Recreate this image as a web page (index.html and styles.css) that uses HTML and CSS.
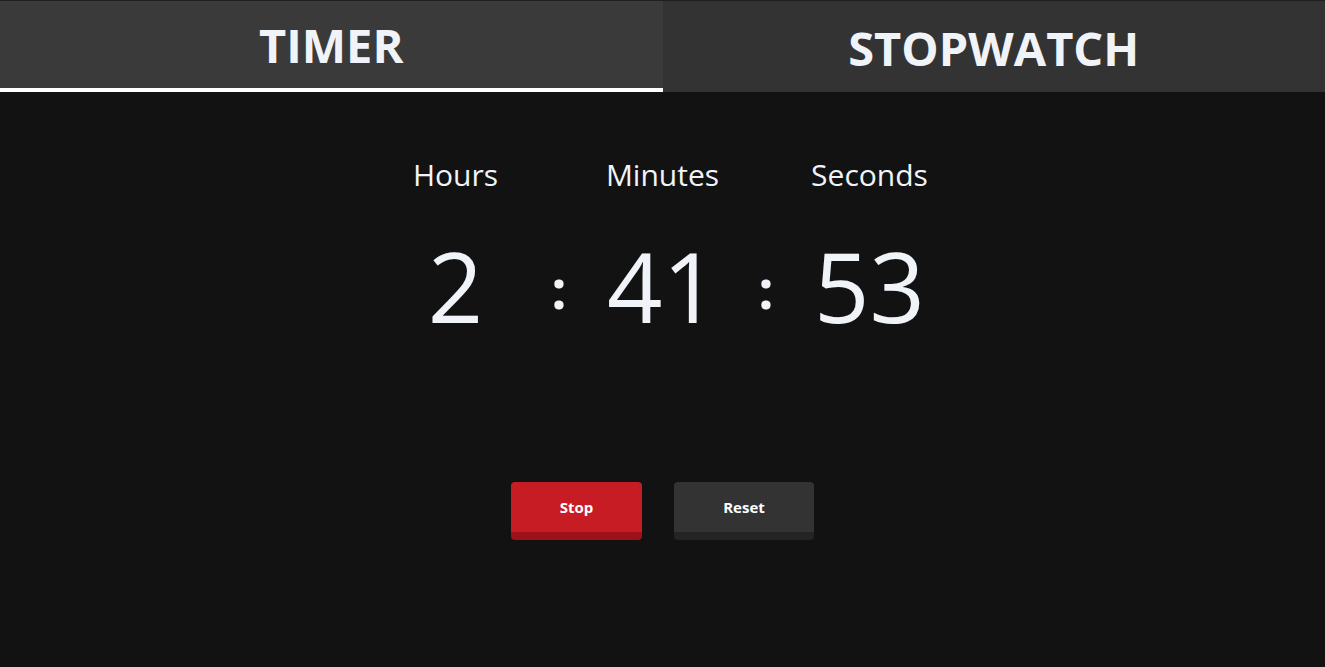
FILE: index.html
```html
<!DOCTYPE html>
<html lang="en">
<head>
<meta charset="utf-8">
<title>Timer</title>
<link rel="stylesheet" href="styles.css">
</head>
<body>
<nav class="tabs">
  <div class="tab tab-active">TIMER</div>
  <div class="tab">STOPWATCH</div>
</nav>
<main class="timer">
  <div class="labels">
    <div class="unit">Hours</div>
    <div class="sep"></div>
    <div class="unit">Minutes</div>
    <div class="sep"></div>
    <div class="unit">Seconds</div>
  </div>
  <div class="digits">
    <div class="unit num">2</div>
    <div class="sep colon">:</div>
    <div class="unit num">41</div>
    <div class="sep colon">:</div>
    <div class="unit num">53</div>
  </div>
  <div class="actions">
    <button class="btn btn-stop">Stop</button>
    <button class="btn btn-reset">Reset</button>
  </div>
</main>
</body>
</html>
```

FILE: styles.css
```css
html, body {
  margin: 0;
  padding: 0;
  background: #121212;
  font-family: "Open Sans", "Noto Sans", sans-serif;
  color: #f0f4f9;
}

.tabs {
  display: flex;
  border-top: 1px solid #1b221d;
  height: 91px;
}

.tab {
  flex: 1;
  display: flex;
  align-items: center;
  justify-content: center;
  background: #333333;
  font-size: 47px;
  font-weight: 700;
  box-sizing: border-box;
  padding-top: 2px;
}

.tab-active {
  background: #3a3a3a;
  border-bottom: 4px solid #ffffff;
  padding-top: 0;
}

.timer {
  display: flex;
  flex-direction: column;
  align-items: center;
  padding-top: 62px;
}

.labels, .digits {
  display: flex;
}

.unit {
  width: 160px;
  text-align: center;
}

.sep {
  width: 47px;
  text-align: center;
}

.labels .unit {
  font-size: 30px;
  line-height: 40px;
  margin-top: 1px;
}

.digits {
  margin-top: 40px;
  align-items: center;
}

.num {
  font-size: 97px;
  font-weight: 400;
  line-height: 100px;
}

.colon {
  font-size: 54px;
  line-height: 60px;
  margin-top: 6px;
  font-weight: 700;
}

.actions {
  display: flex;
  gap: 32px;
  margin-top: 147px;
}

.btn {
  font-family: "Open Sans", "Noto Sans", sans-serif;
  font-size: 15px;
  font-weight: 700;
  color: #ffffff;
  border: none;
  border-radius: 4px;
  height: 58px;
  padding: 0;
  cursor: pointer;
}

.btn-stop {
  width: 131px;
  background: #c81c24;
  border-bottom: 8px solid #9c1218;
}

.btn-reset {
  width: 140px;
  background: #333333;
  border-bottom: 8px solid #242424;
}
```
